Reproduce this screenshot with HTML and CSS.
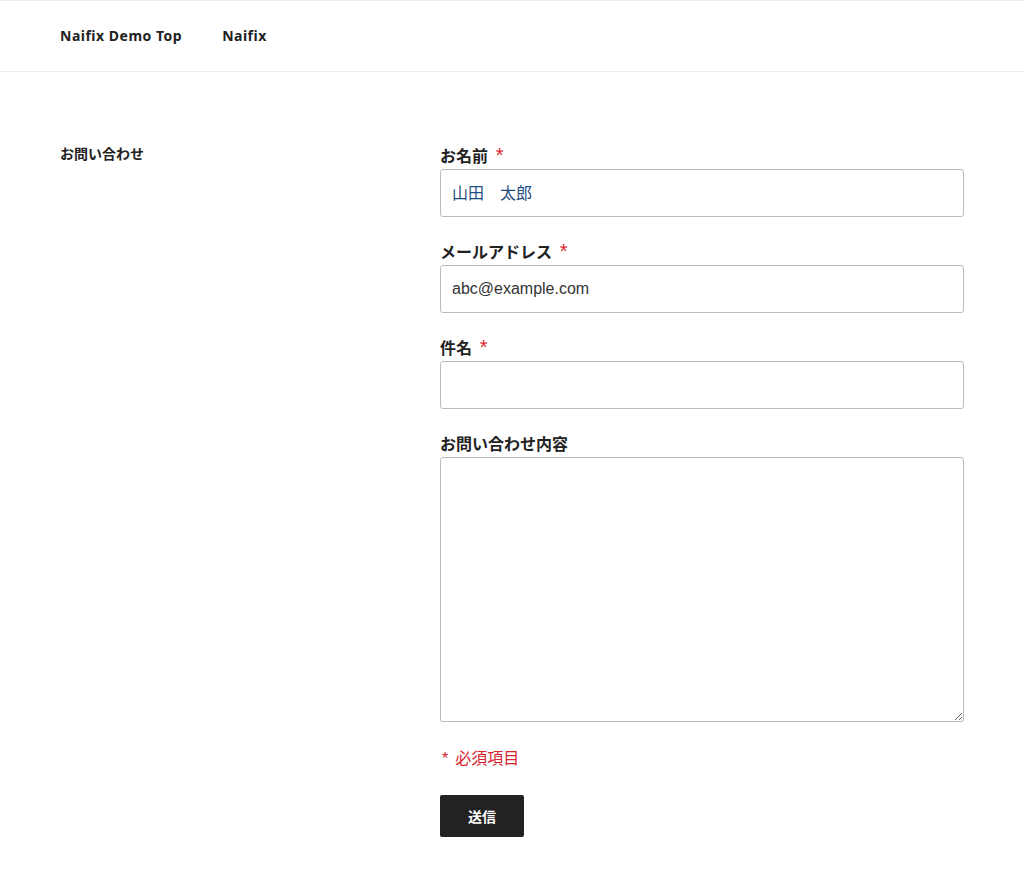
FILE: index.html
```html
<!DOCTYPE html>
<html lang="ja">
<head>
<meta charset="utf-8">
<title>お問い合わせ</title>
<link rel="stylesheet" href="styles.css">
</head>
<body>
<header class="site-header">
  <nav class="nav">
    <a class="nav-link" href="#">Naifix Demo Top</a>
    <a class="nav-link" href="#">Naifix</a>
  </nav>
</header>
<main class="main">
  <h1 class="page-title">お問い合わせ</h1>
  <form class="form">
    <div class="field">
      <label class="label">お名前 <span class="req">*</span></label>
      <input class="input input-name" type="text" value="山田　太郎">
    </div>
    <div class="field">
      <label class="label">メールアドレス <span class="req">*</span></label>
      <input class="input" type="text" value="abc@example.com">
    </div>
    <div class="field">
      <label class="label">件名 <span class="req">*</span></label>
      <input class="input" type="text" value="">
    </div>
    <div class="field">
      <label class="label">お問い合わせ内容</label>
      <textarea class="textarea"></textarea>
    </div>
    <p class="note"><span class="note-star">*</span>必須項目</p>
    <button class="submit" type="button">送信</button>
  </form>
</main>
</body>
</html>
```

FILE: styles.css
```css
html, body {
  margin: 0;
  padding: 0;
  background: #fff;
  color: #222;
  font-family: "Noto Sans", "Noto Sans CJK JP", sans-serif;
}
.site-header {
  border-top: 1px solid #ececec;
  border-bottom: 1px solid #ececec;
  height: 70px;
  display: flex;
  align-items: center;
  padding: 0 60px;
}
.nav {
  display: flex;
  gap: 40px;
}
.nav-link {
  color: #222;
  text-decoration: none;
  font-size: 14px;
  font-weight: 700;
  line-height: 20px;
  letter-spacing: 0.5px;
}
.main {
  display: grid;
  grid-template-columns: 380px 524px;
  padding: 73px 60px 40px;
}
.page-title {
  margin: 0;
  font-size: 14px;
  font-weight: 700;
  line-height: 16px;
  font-family: "Noto Sans CJK JP", sans-serif;
}
.form {
  display: flex;
  flex-direction: column;
}
.field {
  display: flex;
  flex-direction: column;
  margin-bottom: 24px;
}
.label {
  font-family: "Noto Sans CJK JP", sans-serif;
  font-size: 16px;
  font-weight: 700;
  line-height: 20px;
  margin-bottom: 4px;
  color: #222;
}
.req {
  color: #e0202e;
  font-family: "Liberation Sans", sans-serif;
  font-weight: 400;
  font-size: 20px;
  line-height: 0;
  margin-left: 4px;
}
.input {
  box-sizing: border-box;
  height: 48px;
  width: 524px;
  border: 1px solid #bbb;
  border-radius: 3px;
  padding: 0 11px;
  font-family: "Liberation Sans", "Noto Sans CJK JP", sans-serif;
  font-size: 16px;
  color: #333;
  margin: 0;
}
.input-name {
  color: #1f4f82;
  font-family: "Noto Sans CJK JP", sans-serif;
  padding-bottom: 3px;
}
.textarea {
  box-sizing: border-box;
  height: 265px;
  width: 524px;
  border: 1px solid #bbb;
  border-radius: 3px;
  margin: 0;
  padding: 11px;
  font-family: "Liberation Sans", sans-serif;
  font-size: 16px;
}
.note {
  margin: -1px 0 24px;
  color: #d8262f;
  font-family: "Noto Sans CJK JP", sans-serif;
  font-size: 16px;
  line-height: 24px;
}
.note-star {
  font-family: "Liberation Sans", sans-serif;
  margin-left: 2px;
  margin-right: 7px;
}
.submit {
  width: 84px;
  height: 42px;
  background: #222;
  color: #fff;
  border: 0;
  border-radius: 2px;
  font-family: "Noto Sans CJK JP", sans-serif;
  font-size: 14px;
  font-weight: 700;
  padding: 0;
  cursor: pointer;
}
```
